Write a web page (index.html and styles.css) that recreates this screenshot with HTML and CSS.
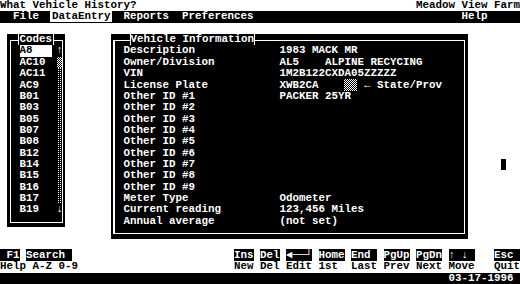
FILE: index.html
```html
<!DOCTYPE html>
<html lang="en">
<head>
    <meta charset="UTF-8">
    <meta name="viewport" content="width=device-width, initial-scale=1.0">
    <title>What Vehicle History?</title>
    <link rel="stylesheet" href="styles.css">
</head>
<body>
    <!-- Title line -->
    <div class="row title-bar">
        <span>What Vehicle History?</span>
        <span>Meadow View Farm</span>
    </div>

    <!-- Menu bar -->
    <div class="row menu-bar">
        <span>  File  <span class="active">DataEntry</span>  Reports  Preferences</span>
        <span>Help     </span>
    </div>

    <div class="main">
        <!-- Codes list -->
        <div class="panel codes">
            <div class="frame">
                <div class="caption">Codes</div>
                <div class="codes-body">
                    <ul class="code-list">
                        <li class="selected">A8</li>
                        <li>AC10</li>
                        <li>AC11</li>
                        <li>AC9</li>
                        <li>B01</li>
                        <li>B03</li>
                        <li>B05</li>
                        <li>B07</li>
                        <li>B08</li>
                        <li>B12</li>
                        <li>B14</li>
                        <li>B15</li>
                        <li>B16</li>
                        <li>B17</li>
                        <li>B19</li>
                    </ul>
                    <div class="scrollbar">
                        <span class="arrow">↑</span>
                        <span class="thumb"></span>
                        <span class="track"></span>
                        <span class="arrow">↓</span>
                    </div>
                </div>
            </div>
        </div>

        <!-- Vehicle Information -->
        <div class="panel vehicle">
            <div class="frame">
                <div class="caption">Vehicle Information</div>
                <div class="fields">
                    <div class="field"><span class="label">Description</span><span class="value">1983 MACK MR</span></div>
                    <div class="field"><span class="label">Owner/Division</span><span class="value">AL5    ALPINE RECYCING</span></div>
                    <div class="field"><span class="label">VIN</span><span class="value">1M2B122CXDA05ZZZZZ</span></div>
                    <div class="field"><span class="label">License Plate</span><span class="value">XWB2CA    <span class="blank">  </span> ← State/Prov</span></div>
                    <div class="field"><span class="label">Other ID #1</span><span class="value">PACKER 25YR</span></div>
                    <div class="field"><span class="label">Other ID #2</span><span class="value"></span></div>
                    <div class="field"><span class="label">Other ID #3</span><span class="value"></span></div>
                    <div class="field"><span class="label">Other ID #4</span><span class="value"></span></div>
                    <div class="field"><span class="label">Other ID #5</span><span class="value"></span></div>
                    <div class="field"><span class="label">Other ID #6</span><span class="value"></span></div>
                    <div class="field"><span class="label">Other ID #7</span><span class="value"></span></div>
                    <div class="field"><span class="label">Other ID #8</span><span class="value"></span></div>
                    <div class="field"><span class="label">Other ID #9</span><span class="value"></span></div>
                    <div class="field"><span class="label">Meter Type</span><span class="value">Odometer</span></div>
                    <div class="field"><span class="label">Current reading</span><span class="value">123,456 Miles</span></div>
                    <div class="field"><span class="label">Annual average</span><span class="value">(not set)</span></div>
                </div>
            </div>
        </div>

        <div class="cursor"></div>
    </div>

    <!-- Key legend -->
    <div class="keys">
        <div class="row">
            <span><span class="cap"> F1</span> <span class="cap">Search </span></span>
            <span><span class="cap">Ins</span> <span class="cap">Del</span> <span class="cap">◄──┘</span> <span class="cap">Home</span> <span class="cap">End </span> <span class="cap">PgUp</span> <span class="cap">PgDn</span> <span class="cap">↑ ↓ </span>   <span class="cap">Esc </span></span>
        </div>
        <div class="row">
            <span>Help A-Z 0-9</span>
            <span>New Del Edit 1st  Last Prev Next Move   Quit</span>
        </div>
    </div>

    <div class="row status-bar">
        <span>03-17-1996 </span>
    </div>
</body>
</html>
```

FILE: styles.css
```css
:root {
    --r: 11.36px;  /* one text row */
    --c: 6.5px;    /* one text column */
}

* {
    margin: 0;
    padding: 0;
    box-sizing: border-box;
}

body {
    width: 520px;
    height: 284px;
    overflow: hidden;
    background-color: #fff;
    color: #000;
    font-family: "Liberation Mono", "DejaVu Sans Mono", monospace;
    font-size: 10.83px;
    font-weight: bold;
    line-height: var(--r);
}

/* Text rows */
.row {
    display: flex;
    justify-content: space-between;
    height: var(--r);
}

.row > span,
.label,
.value,
.caption {
    white-space: pre;
}

/* Menu bar */
.menu-bar {
    background-color: #000;
    color: #fff;
}

.menu-bar .active {
    background-color: #fff;
    color: #000;
    box-shadow: -2px 0 0 #fff, 2px 0 0 #fff;
}

/* Main area */
.main {
    display: flex;
    align-items: flex-start;
    height: calc(var(--r) * 20);
    padding-top: var(--r);
    padding-left: var(--c);
}

.panel {
    background-color: #000;
    color: #fff;
}

.frame {
    border: 1px solid #fff;
}

.caption {
    width: fit-content;
    margin-top: calc(-1px - var(--r) / 2);
    border-left: 1px solid #fff;
    border-right: 1px solid #fff;
    background-color: #000;
}

/* Codes box */
.codes {
    width: calc(var(--c) * 9);
    height: calc(var(--r) * 17);
    padding: calc(var(--r) / 2) 2px 0 3px;
}

.codes .frame {
    height: calc(var(--r) * 16 + 1px);
}

.codes .caption {
    margin-left: 7px;
    padding: 0 1px;
}

.codes-body {
    display: flex;
}

.code-list {
    list-style: none;
    padding-left: 9px;
}

.code-list li {
    width: calc(var(--c) * 5);
    height: var(--r);
}

.code-list .selected {
    background-color: #fff;
    color: #000;
}

.scrollbar {
    display: flex;
    flex-direction: column;
    width: 5px;
    margin-left: 5px;
}

.scrollbar span {
    height: var(--r);
}

.scrollbar .arrow {
    display: flex;
    justify-content: center;
}

.scrollbar .thumb {
    background: repeating-conic-gradient(#fff 0 25%, #000 0 50%) 0 0 / 2px 2px;
}

.scrollbar .track {
    height: calc(var(--r) * 12);
    background: conic-gradient(#fff 0 25%, #000 0) 0 0 / 2px 2px;
}

/* Vehicle information box */
.vehicle {
    width: calc(var(--c) * 55);
    height: calc(var(--r) * 18);
    margin-left: calc(var(--c) * 7);
    padding: calc(var(--r) / 2) 3px 0 2px;
}

.vehicle .frame {
    height: calc(var(--r) * 17 + 1px);
    border-left-width: 2px;
}

.vehicle .caption {
    margin-left: 15px;
}

.fields {
    padding-left: 9px;
}

.field {
    display: flex;
    height: var(--r);
}

.label {
    width: calc(var(--c) * 24);
}

.blank {
    background: repeating-conic-gradient(#fff 0 25%, #000 0 50%) 0 0 / 2px 2px;
}

.cursor {
    width: 5px;
    height: var(--r);
    margin-top: calc(var(--r) * 11);
    margin-left: calc(var(--c) * 5);
    background-color: #000;
}

/* Key legend and status line */
.cap {
    background-color: #000;
    color: #fff;
}

.status-bar {
    justify-content: flex-end;
    background-color: #000;
    color: #fff;
}
```
